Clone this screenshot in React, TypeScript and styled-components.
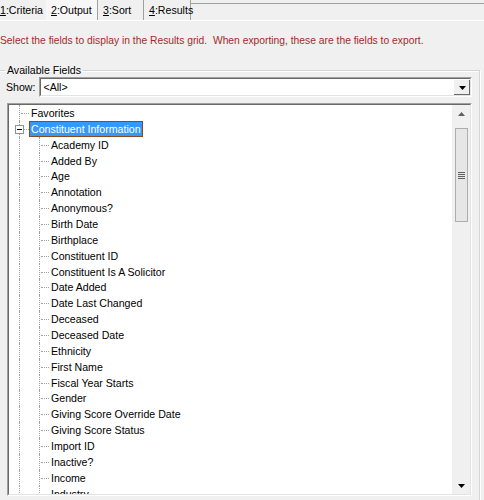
import styled, { createGlobalStyle } from "styled-components";

const GlobalStyle = createGlobalStyle`
  html, body {
    margin: 0;
    padding: 0;
    background: #f0f0f0;
    overflow: hidden;
  }
  body {
    font-family: "Liberation Sans", Arial, sans-serif;
    font-size: 10.6px;
    color: #000;
  }
`;

const Page = styled.div`
  width: 484px;
  height: 500px;
  overflow: hidden;
`;

const TabBar = styled.div`
  display: flex;
  height: 20px;
  border-bottom: 1px solid #fff;
`;

const Tab = styled.div<{ $w: number; $active?: boolean }>`
  display: flex;
  align-items: center;
  width: ${(p) => p.$w}px;
  height: 20px;
  padding-left: 5px;
  background: ${(p) => (p.$active ? "#f7f7f7" : "#f0f0f0")};
  border-right: 1px solid #a0a0a0;
  box-sizing: border-box;
  white-space: nowrap;

  &:first-child {
    padding-left: 0;
    border-right: none;
  }
`;

const TabFill = styled.div`
  flex: 1;
  border-top: 1px solid #a0a0a0;
  margin-top: 3px;
`;

const Hint = styled.div`
  color: #a52a2a;
  font-size: 10.3px;
  padding: 14px 0 0 0;
  height: 29px;
  white-space: nowrap;
`;

const Group = styled.fieldset`
  margin: 0 4px 0 -2px;
  padding: 0 7px 0 8px;
  border: 1px solid #d5d5d5;
  box-shadow: inset 1px 1px 0 #fff, 1px 1px 0 #fff;
  height: 460px;
`;

const Legend = styled.legend`
  padding: 0 2px;
  margin-left: -2px;
`;

const ShowRow = styled.div`
  display: flex;
  align-items: center;
  gap: 4px;
  margin-top: 1px;
  margin-left: -1px;
`;

const ComboBox = styled.div`
  flex: 1;
  display: flex;
  height: 20px;
  box-sizing: border-box;
  border-top: 1px solid #a0a0a0;
  border-left: 1px solid #a0a0a0;
  border-right: 1px solid #fff;
  border-bottom: 1px solid #fff;
  background: #fff;
`;

const ComboInner = styled.div`
  flex: 1;
  display: flex;
  border-top: 1px solid #696969;
  border-left: 1px solid #696969;
  border-right: 1px solid #e3e3e3;
  border-bottom: 1px solid #e3e3e3;
`;

const ComboText = styled.div`
  flex: 1;
  padding: 2px 0 0 2px;
`;

const ArrowButton = styled.div`
  width: 16px;
  display: flex;
  align-items: center;
  justify-content: center;
  background: #f0f0f0;
  border-left: 1px solid #fff;
  border-top: 1px solid #fff;
  box-shadow: inset -1px -1px 0 #696969;
`;

const TreeBox = styled.div`
  margin-top: 6px;
  height: 393px;
  display: flex;
  box-sizing: border-box;
  border-top: 1px solid #a0a0a0;
  border-left: 1px solid #a0a0a0;
  border-right: 1px solid #fff;
  border-bottom: 1px solid #fff;
`;

const TreeInner = styled.div`
  flex: 1;
  display: flex;
  background: #fff;
  border-top: 1px solid #696969;
  border-left: 1px solid #696969;
  border-right: 1px solid #e3e3e3;
  border-bottom: 1px solid #e3e3e3;
  min-width: 0;
`;

const TreeList = styled.div`
  flex: 1;
  overflow: hidden;
  padding: 0 0 0 10px;
`;

const Row = styled.div`
  display: flex;
  height: 15.87px;
  align-items: stretch;
  white-space: nowrap;
`;

const Guide = styled.div<{ $w: number; $branch?: boolean }>`
  position: relative;
  flex: 0 0 ${(p) => p.$w}px;
  border-left: 1px dotted #a0a0a0;
  box-sizing: border-box;

  &::after {
    content: "";
    display: ${(p) => (p.$branch ? "block" : "none")};
    position: absolute;
    left: 1px;
    top: 8px;
    width: ${(p) => p.$w - 2}px;
    border-top: 1px dotted #a0a0a0;
  }
`;

const Expander = styled.div`
  position: absolute;
  left: -5px;
  top: 4px;
  width: 9px;
  height: 9px;
  box-sizing: border-box;
  border: 1px solid #919191;
  background: #fff;
  z-index: 1;

  &::before {
    content: "";
    position: absolute;
    left: 1px;
    top: 3px;
    width: 5px;
    height: 1px;
    background: #000;
  }
`;

const Label = styled.div<{ $selected?: boolean }>`
  display: flex;
  align-items: center;
  padding: 0 2px;
  height: 16px;
  box-sizing: border-box;
  background: ${(p) => (p.$selected ? "#3399ff" : "transparent")};
  color: ${(p) => (p.$selected ? "#fff" : "#000")};
  outline: ${(p) => (p.$selected ? "1px solid #8b4a1c" : "none")};
  outline-offset: -1px;
`;

const ScrollBar = styled.div`
  width: 17px;
  display: flex;
  flex-direction: column;
  background: #f0f0f0;
  border-left: 1px solid #f0f0f0;
`;

const ScrollButton = styled.div`
  height: 17px;
  display: flex;
  align-items: center;
  justify-content: center;
`;

const Track = styled.div`
  flex: 1;
  display: flex;
  flex-direction: column;
  align-items: center;
`;

const Thumb = styled.div`
  margin-top: 6px;
  width: 13px;
  height: 94px;
  box-sizing: border-box;
  border: 1px solid #acacac;
  background: #e6e6e6;
  display: flex;
  align-items: center;
  justify-content: center;
`;

const Grip = styled.div`
  width: 7px;
  height: 7px;
  background: repeating-linear-gradient(
    to bottom,
    #606060 0,
    #606060 1px,
    transparent 1px,
    transparent 2px
  );
`;

const fields = [
  "Academy ID",
  "Added By",
  "Age",
  "Annotation",
  "Anonymous?",
  "Birth Date",
  "Birthplace",
  "Constituent ID",
  "Constituent Is A Solicitor",
  "Date Added",
  "Date Last Changed",
  "Deceased",
  "Deceased Date",
  "Ethnicity",
  "First Name",
  "Fiscal Year Starts",
  "Gender",
  "Giving Score Override Date",
  "Giving Score Status",
  "Import ID",
  "Inactive?",
  "Income",
  "Industry",
];

const tabs = [
  { key: "1", label: ":Criteria", w: 46 },
  { key: "2", label: ":Output", w: 52, active: true },
  { key: "3", label: ":Sort", w: 46 },
  { key: "4", label: ":Results", w: 47 },
];

const Triangle = ({ up }: { up?: boolean }) => (
  <svg width="7" height="4" viewBox="0 0 7 4">
    <path
      d={up ? "M3.5 0 L7 4 L0 4 Z" : "M0 0 L7 0 L3.5 4 Z"}
      fill={up ? "#606060" : "#000"}
    />
  </svg>
);

const App = () => {
  return (
    <Page>
      <GlobalStyle />
      <TabBar>
        {tabs.map((t) => (
          <Tab key={t.key} $w={t.w} $active={t.active}>
            <span>
              <u>{t.key}</u>
              {t.label}
            </span>
          </Tab>
        ))}
        <TabFill />
      </TabBar>
      <Hint>
        Select the fields to display in the Results grid.&nbsp; When exporting,
        these are the fields to export.
      </Hint>
      <Group>
        <Legend>Available Fields</Legend>
        <ShowRow>
          <span>Show:</span>
          <ComboBox>
            <ComboInner>
              <ComboText>&lt;All&gt;</ComboText>
              <ArrowButton>
                <Triangle />
              </ArrowButton>
            </ComboInner>
          </ComboBox>
        </ShowRow>
        <TreeBox>
          <TreeInner>
            <TreeList>
              <Row>
                <Guide $w={10} $branch />
                <Label>Favorites</Label>
              </Row>
              <Row>
                <Guide $w={10} $branch>
                  <Expander />
                </Guide>
                <Label $selected>Constituent Information</Label>
              </Row>
              {fields.map((f) => (
                <Row key={f}>
                  <Guide $w={20} />
                  <Guide $w={10} $branch />
                  <Label>{f}</Label>
                </Row>
              ))}
            </TreeList>
            <ScrollBar>
              <ScrollButton>
                <Triangle up />
              </ScrollButton>
              <Track>
                <Thumb>
                  <Grip />
                </Thumb>
              </Track>
              <ScrollButton>
                <Triangle />
              </ScrollButton>
            </ScrollBar>
          </TreeInner>
        </TreeBox>
      </Group>
    </Page>
  );
};

export default App;
